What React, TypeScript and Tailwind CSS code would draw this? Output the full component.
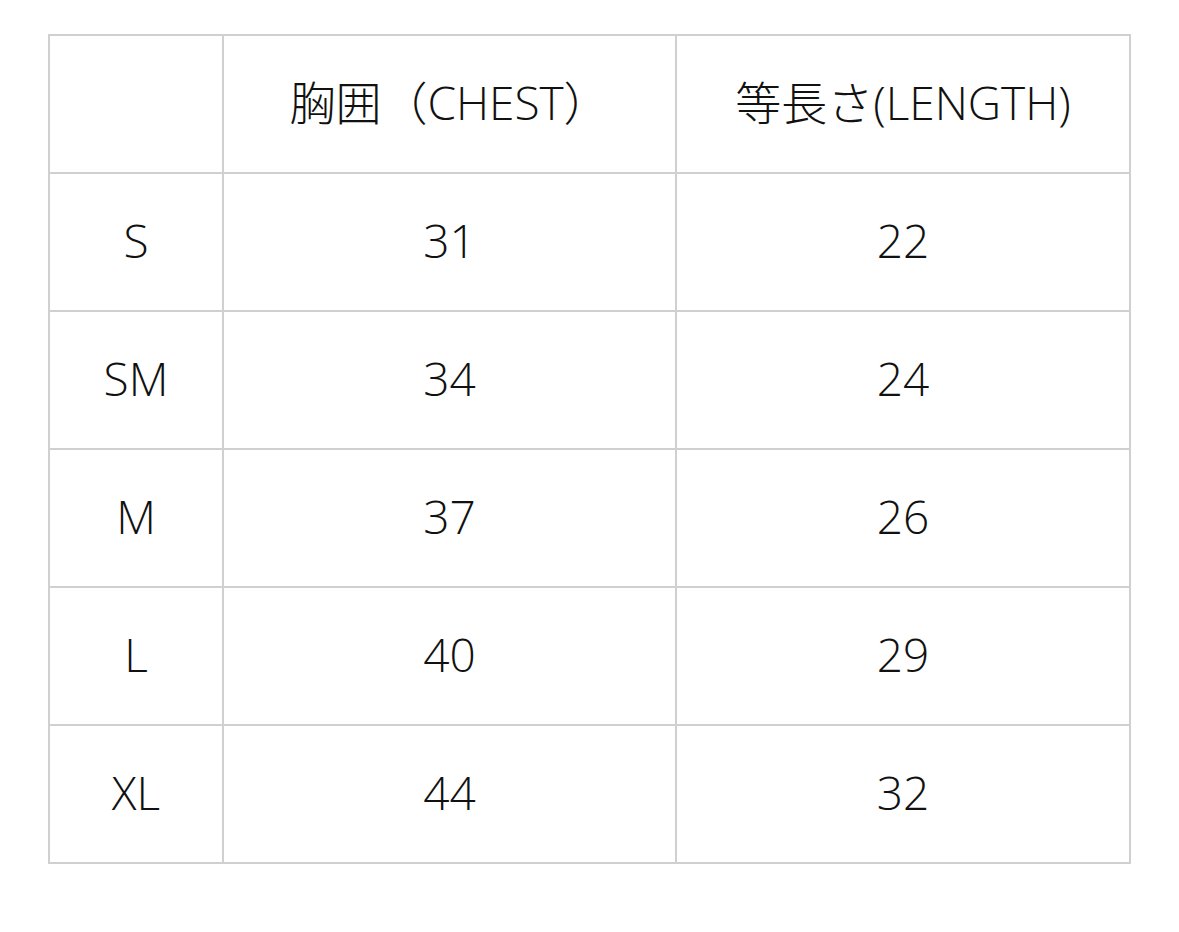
import React from 'react';

const rows: [string, string, string][] = [
  ['S', '31', '22'],
  ['SM', '34', '24'],
  ['M', '37', '26'],
  ['L', '40', '29'],
  ['XL', '44', '32'],
];

const Cell: React.FC<{ children?: React.ReactNode }> = ({ children }) => (
  <div className="bg-white flex items-center justify-center pb-[4px] text-[46px] font-light leading-none text-[#111]">
    {children}
  </div>
);

export default function App() {
  return (
    <div
      className="w-[1179px] h-[932px] bg-white pt-[34px] pl-[48px]"
      style={{ fontFamily: '"Open Sans", "Noto Sans CJK JP", sans-serif' }}
    >
      <div className="grid grid-cols-[172px_451px_452px] grid-rows-[repeat(6,136px)] gap-[2px] p-[2px] bg-[#d0d0d0] w-[1083px]">
        <Cell />
        <Cell>胸囲（CHEST）</Cell>
        <Cell>等長さ(LENGTH)</Cell>
        {rows.map(([size, chest, length]) => (
          <React.Fragment key={size}>
            <Cell>{size}</Cell>
            <Cell>{chest}</Cell>
            <Cell>{length}</Cell>
          </React.Fragment>
        ))}
      </div>
    </div>
  );
}
